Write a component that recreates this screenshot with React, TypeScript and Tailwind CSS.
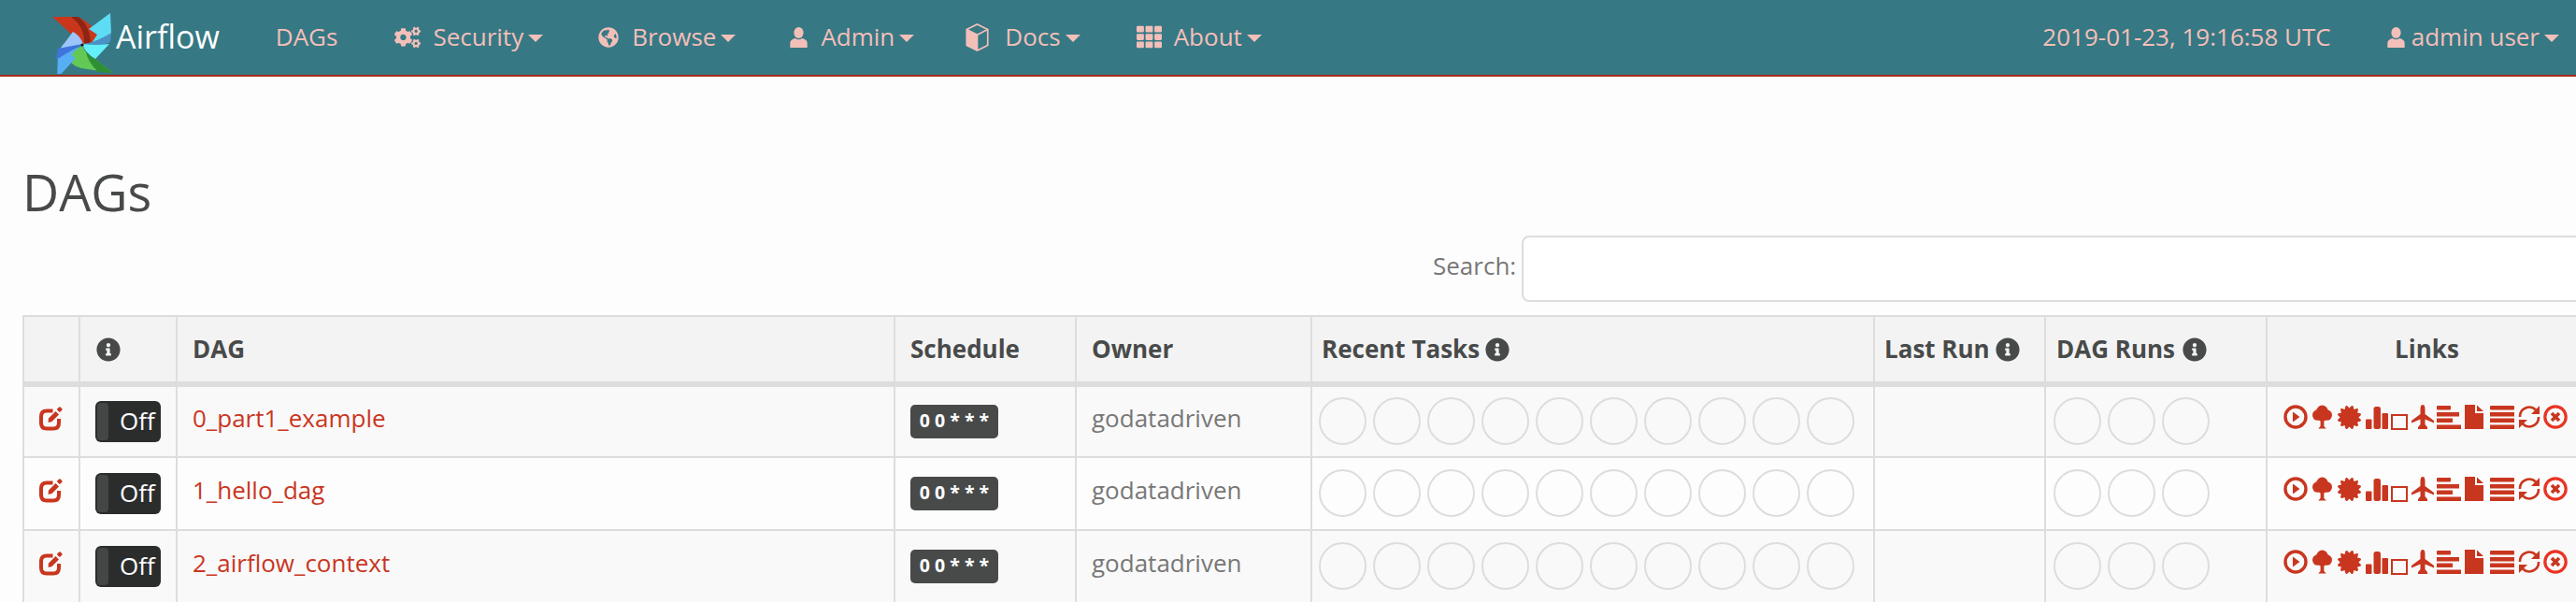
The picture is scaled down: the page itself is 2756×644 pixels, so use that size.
import type { ReactNode } from 'react';
import { FaCogs, FaGlobeAmericas, FaTh, FaInfoCircle, FaCertificate } from 'react-icons/fa';

const DAGS = ['0_part1_example', '1_hello_dag', '2_airflow_context'];

function Logo() {
  return (
    <svg viewBox="0 0 70 70" className="h-[70px] w-[70px] shrink-0">
      <path d="M1 9 L28 9 Q44 16 49 29 L44 37 L33 38 Z" fill="#c9361c" />
      <path d="M21 9 L29 9 Q41 18 42 38 L35 38 Q36 20 21 9Z" fill="#8e2413" />
      <path d="M63 5 L64 27 L43 37 L49 28 L40 22 Z" fill="#5fdcf5" />
      <path d="M64 26 L63 36 Q47 44 33 38 Q50 36 64 26Z" fill="#4a92c4" />
      <path d="M33 38 Q48 40 62 38 L47 54 Q36 48 33 38Z" fill="#63f0fb" />
      <path d="M33 40 L15 50 Q22 62 32 64 L66 69 L48 55 Q37 50 33 40Z" fill="#63c955" />
      <path d="M37 46 Q38 56 50 68 L66 69 L48 55 Q41 51 37 46Z" fill="#2f8f34" />
      <path d="M33 40 L7 50 L6 75 L26 53 Q16 50 33 40Z" fill="#58aef5" />
      <path d="M23 25 Q31 29 34 38 L7 50 Q9 42 14 37 Z" fill="#9cc5fb" />
      <path d="M33 38 L7 43 L5 55 Z" fill="#3f74dc" />
      <circle cx="33" cy="39" r="1.6" fill="#111" />
    </svg>
  );
}

function Caret() {
  return <span className="ml-[5px] mt-[3px] h-0 w-0 border-x-[8px] border-t-[8px] border-x-transparent border-t-[#f3bfb9]" />;
}

function UserIcon({ className }: { className: string }) {
  return (
    <svg viewBox="0 0 20 24" className={className} fill="currentColor">
      <ellipse cx="10" cy="6.5" rx="5.6" ry="6.5" />
      <path d="M0 24 L0 18.5 Q0 14.5 6 13 Q10 16 14 13 Q20 14.5 20 18.5 L20 24 Q20 24 18 24 L2 24 Q0 24 0 24Z" />
    </svg>
  );
}

function CubeIcon({ className }: { className: string }) {
  return (
    <svg viewBox="0 0 26 32" className={className}>
      <path d="M13 1 L25 7 L25 25 L13 31 L1 25 L1 7 Z" fill="none" stroke="currentColor" strokeWidth="1.8" />
      <path d="M1 7 L13 13 L25 7 M13 13 L13 31" fill="none" stroke="currentColor" strokeWidth="1.8" />
      <path d="M1 7 L13 13 L13 31 L1 25 Z" fill="currentColor" />
    </svg>
  );
}

function NavItem({ icon, label, iconGap, className }: { icon?: ReactNode; label: string; iconGap?: string; className: string }) {
  return (
    <div className={`flex items-center ${className}`}>
      {icon}
      <span className={iconGap}>{label}</span>
      <Caret />
    </div>
  );
}

function EditIcon() {
  return (
    <svg viewBox="0 0 26 26" className="h-[26px] w-[27px]" fill="none">
      <path d="M15 4.5 H8.5 Q2.5 4.5 2.5 10.5 V17.5 Q2.5 23.5 8.5 23.5 H15.5 Q21.5 23.5 21.5 17.5 V13" stroke="#c9361f" strokeWidth="4" />
      <path d="M10 17 L10.5 12.5 L18 5 L21.5 8.5 L14 16 Z" fill="#c9361f" />
      <rect x="20" y="0.5" width="4.5" height="4.5" rx="1" transform="rotate(45 22 3)" fill="#c9361f" />
    </svg>
  );
}

function Toggle() {
  return (
    <div className="relative h-[44px] w-[70px] rounded-[6px] bg-[#2b2d2d] text-[26px] leading-[44px] text-white">
      <span className="absolute inset-y-[2px] left-[2px] w-[12px] rounded-[4px] bg-[#444646]" />
      <span className="absolute left-[26px] top-[-1px]">Off</span>
    </div>
  );
}

function Circle() {
  return <span className="block h-[51px] w-[51px] shrink-0 rounded-full border-2 border-[#dddddd]" />;
}

function LinkIcons() {
  const c = '#c9361f';
  return (
    <div className="flex h-[27px] items-center text-[#c9361f]">
      {/* play */}
      <svg viewBox="0 0 26 26" className="h-[26px] w-[26px] shrink-0">
        <circle cx="13" cy="13" r="11" fill="none" stroke={c} strokeWidth="3.4" />
        <path d="M10 7.5 L17.5 13 L10 18.5Z" fill={c} />
      </svg>
      {/* tree */}
      <svg viewBox="0 0 22 26" className="ml-[5px] h-[26px] w-[21px] shrink-0" fill={c}>
        <circle cx="11" cy="6.5" r="6.5" />
        <circle cx="6" cy="11" r="6" />
        <circle cx="16" cy="11" r="6" />
        <circle cx="11" cy="12" r="6" />
        <path d="M9 12 H13 V23.5 L15.5 26 H6.5 L9 23.5Z" />
      </svg>
      <FaCertificate className="ml-[6px] h-[25px] w-[25px] shrink-0" />
      {/* signal */}
      <svg viewBox="0 0 24 26" className="ml-[5px] h-[26px] w-[24px] shrink-0" fill={c}>
        <rect x="0" y="15.5" width="6.5" height="10.5" rx="1" />
        <rect x="8.5" y="2" width="7.5" height="24" rx="2.5" />
        <rect x="17.5" y="9" width="6.5" height="17" rx="1" />
      </svg>
      {/* unchecked box */}
      <span className="ml-[3px] h-[17px] w-[18px] shrink-0 self-end border-2 border-[#c9361f]" />
      {/* plane */}
      <svg viewBox="0 0 24 26" className="ml-[4px] h-[26px] w-[24px] shrink-0" fill={c}>
        <path d="M12 0 Q14.5 0 14.5 5 V10 L24 17 V19.5 L14.5 15.5 V21 L17 24 V26 H7 V24 L9.5 21 V15.5 L0 19.5 V17 L9.5 10 V5 Q9.5 0 12 0Z" />
      </svg>
      {/* align left */}
      <svg viewBox="0 0 26 26" className="ml-[3px] h-[26px] w-[26px] shrink-0" fill={c}>
        <rect x="0" y="1" width="15" height="4.5" rx="1" />
        <rect x="0" y="8" width="24" height="4.5" />
        <rect x="0" y="14.5" width="17" height="4.5" />
        <rect x="0" y="21.5" width="26" height="4.5" />
      </svg>
      {/* file */}
      <svg viewBox="0 0 20 26" className="ml-[4px] h-[26px] w-[20px] shrink-0" fill={c}>
        <path d="M0 0 H11 V9 H20 V26 H0Z" />
        <path d="M13 0.5 L20 7 H13Z" />
      </svg>
      {/* align justify */}
      <svg viewBox="0 0 26 26" className="ml-[7px] h-[26px] w-[26px] shrink-0" fill={c}>
        <rect x="0" y="1" width="26" height="4.5" rx="1" />
        <rect x="0" y="8" width="26" height="4.5" />
        <rect x="0" y="14.5" width="26" height="4.5" />
        <rect x="0" y="21.5" width="26" height="4.5" />
      </svg>
      {/* refresh */}
      <svg viewBox="0 0 24 26" className="ml-[4px] h-[26px] w-[24px] shrink-0" fill="none">
        <path d="M2 13 A10 10 0 0 1 19 5.5" stroke={c} strokeWidth="2.6" />
        <path d="M23 1 V10 H14Z" fill={c} />
        <path d="M22 13 A10 10 0 0 1 5 20.5" stroke={c} strokeWidth="2.6" />
        <path d="M1 25 V16 H10Z" fill={c} />
      </svg>
      {/* remove circle */}
      <svg viewBox="0 0 26 26" className="ml-[3px] h-[26px] w-[26px] shrink-0" fill="none">
        <circle cx="13" cy="13" r="11.2" stroke="#ea3323" strokeWidth="3.2" />
        <path d="M9 9 L17 17 M17 9 L9 17" stroke="#c9361f" strokeWidth="3.6" />
      </svg>
    </div>
  );
}

function InfoIcon({ className }: { className?: string }) {
  return <FaInfoCircle className={`h-[26px] w-[26px] shrink-0 text-[#484a4a] ${className ?? ''}`} />;
}

const thClass = 'border-2 border-[#dddddd] border-b-[6px] bg-[#f3f3f3] px-0 align-middle';
const tdClass = 'border-2 border-[#dddddd] p-0 align-middle';

export default function App() {
  return (
    <div className="h-[644px] w-[2756px] overflow-hidden bg-[#fdfdfd] font-['Open_Sans',sans-serif] text-[#484a4a]">
      <nav className="flex h-[82px] items-center border-b-2 border-[#a62a18] bg-[#367884] pb-[1px] text-[26px] text-[#f3bfb9]">
        <div className="ml-[55px] flex h-full items-start pt-[9px]">
          <Logo />
        </div>
        <span className="ml-[-1px] text-[34px] text-white">Airflow</span>
        <span className="ml-[60px]">DAGs</span>
        <NavItem className="ml-[61px]" iconGap="ml-[13px]" label="Security" icon={<FaCogs className="h-[28px] w-[28px]" />} />
        <NavItem className="ml-[59px]" iconGap="ml-[14px]" label="Browse" icon={<FaGlobeAmericas className="h-[22px] w-[22px]" />} />
        <NavItem className="ml-[58px]" iconGap="ml-[14px]" label="Admin" icon={<UserIcon className="h-[22px] w-[19px]" />} />
        <NavItem className="ml-[55px]" iconGap="ml-[17px]" label="Docs" icon={<CubeIcon className="h-[30px] w-[25px]" />} />
        <NavItem className="ml-[60px]" iconGap="ml-[13px]" label="About" icon={<FaTh className="h-[27px] w-[27px]" />} />
        <span className="ml-auto">2019-01-23, 19:16:58 UTC</span>
        <NavItem className="ml-[60px] mr-[18px]" iconGap="ml-[7px]" label="admin user" icon={<UserIcon className="h-[22px] w-[19px]" />} />
      </nav>

      <div className="pl-[24px]">
        <h2 className="mt-[87px] text-[54px] font-normal leading-[72px]">DAGs</h2>

        <div className="mt-[11px] flex h-[71px] w-[2756px] items-center pl-[1509px]">
          <span className="pb-[6px] text-[26px] text-[#777777]">Search:</span>
          <input className="ml-[6px] h-[71px] w-[1200px] rounded-[8px] border-2 border-[#dddddd] bg-white" />
        </div>

        <table className="mt-[14px] w-[2743px] table-fixed border-collapse text-[26px]">
          <colgroup>
            <col className="w-[60px]" />
            <col className="w-[104px]" />
            <col className="w-[768px]" />
            <col className="w-[194px]" />
            <col className="w-[252px]" />
            <col className="w-[602px]" />
            <col className="w-[183px]" />
            <col className="w-[237px]" />
            <col className="w-[343px]" />
          </colgroup>
          <thead>
            <tr className="h-[73px] font-bold">
              <th className={`${thClass} text-left`} />
              <th className={`${thClass} text-left`}>
                <InfoIcon className="ml-[17px]" />
              </th>
              <th className={`${thClass} pl-[16px] text-left`}>DAG</th>
              <th className={`${thClass} pl-[16px] text-left`}>Schedule</th>
              <th className={`${thClass} pl-[16px] text-left`}>Owner</th>
              <th className={`${thClass} pl-[10px] text-left`}>
                <div className="flex items-center gap-[6px]">
                  Recent Tasks
                  <InfoIcon />
                </div>
              </th>
              <th className={`${thClass} pl-[10px] text-left`}>
                <div className="flex items-center gap-[6px]">
                  Last Run
                  <InfoIcon />
                </div>
              </th>
              <th className={`${thClass} pl-[11px] text-left`}>
                <div className="flex items-center gap-[8px]">
                  DAG Runs
                  <InfoIcon />
                </div>
              </th>
              <th className={`${thClass} text-center`}>Links</th>
            </tr>
          </thead>
          <tbody>
            {DAGS.map((name, i) => (
              <tr key={name} className={`h-[78px] ${i % 2 === 0 ? 'bg-[#f9f9f9]' : 'bg-[#fdfdfd]'}`}>
                <td className={tdClass}>
                  <div className="ml-[15px] mb-[6px]">
                    <EditIcon />
                  </div>
                </td>
                <td className={`${tdClass} pl-[16px]`}>
                  <Toggle />
                </td>
                <td className={`${tdClass} pb-[8px] pl-[16px] text-[#c9361f]`}>{name}</td>
                <td className={`${tdClass} pl-[16px]`}>
                  <span className="block h-[36px] w-[94px] whitespace-nowrap rounded-[5px] bg-[#484a4a] text-center text-[19.5px] font-bold leading-[33px] text-white">0 0 * * *</span>
                </td>
                <td className={`${tdClass} pb-[8px] pl-[16px] text-[#777777]`}>godatadriven</td>
                <td className={`${tdClass} pb-[2px] pl-[7px]`}>
                  <div className="flex gap-[7px]">
                    {Array.from({ length: 10 }).map((_, n) => (
                      <Circle key={n} />
                    ))}
                  </div>
                </td>
                <td className={tdClass} />
                <td className={`${tdClass} pb-[2px] pl-[8px]`}>
                  <div className="flex gap-[7px]">
                    {Array.from({ length: 3 }).map((_, n) => (
                      <Circle key={n} />
                    ))}
                  </div>
                </td>
                <td className={`${tdClass} pb-[10px] pl-[17px]`}>
                  <LinkIcons />
                </td>
              </tr>
            ))}
          </tbody>
        </table>
      </div>
    </div>
  );
}
